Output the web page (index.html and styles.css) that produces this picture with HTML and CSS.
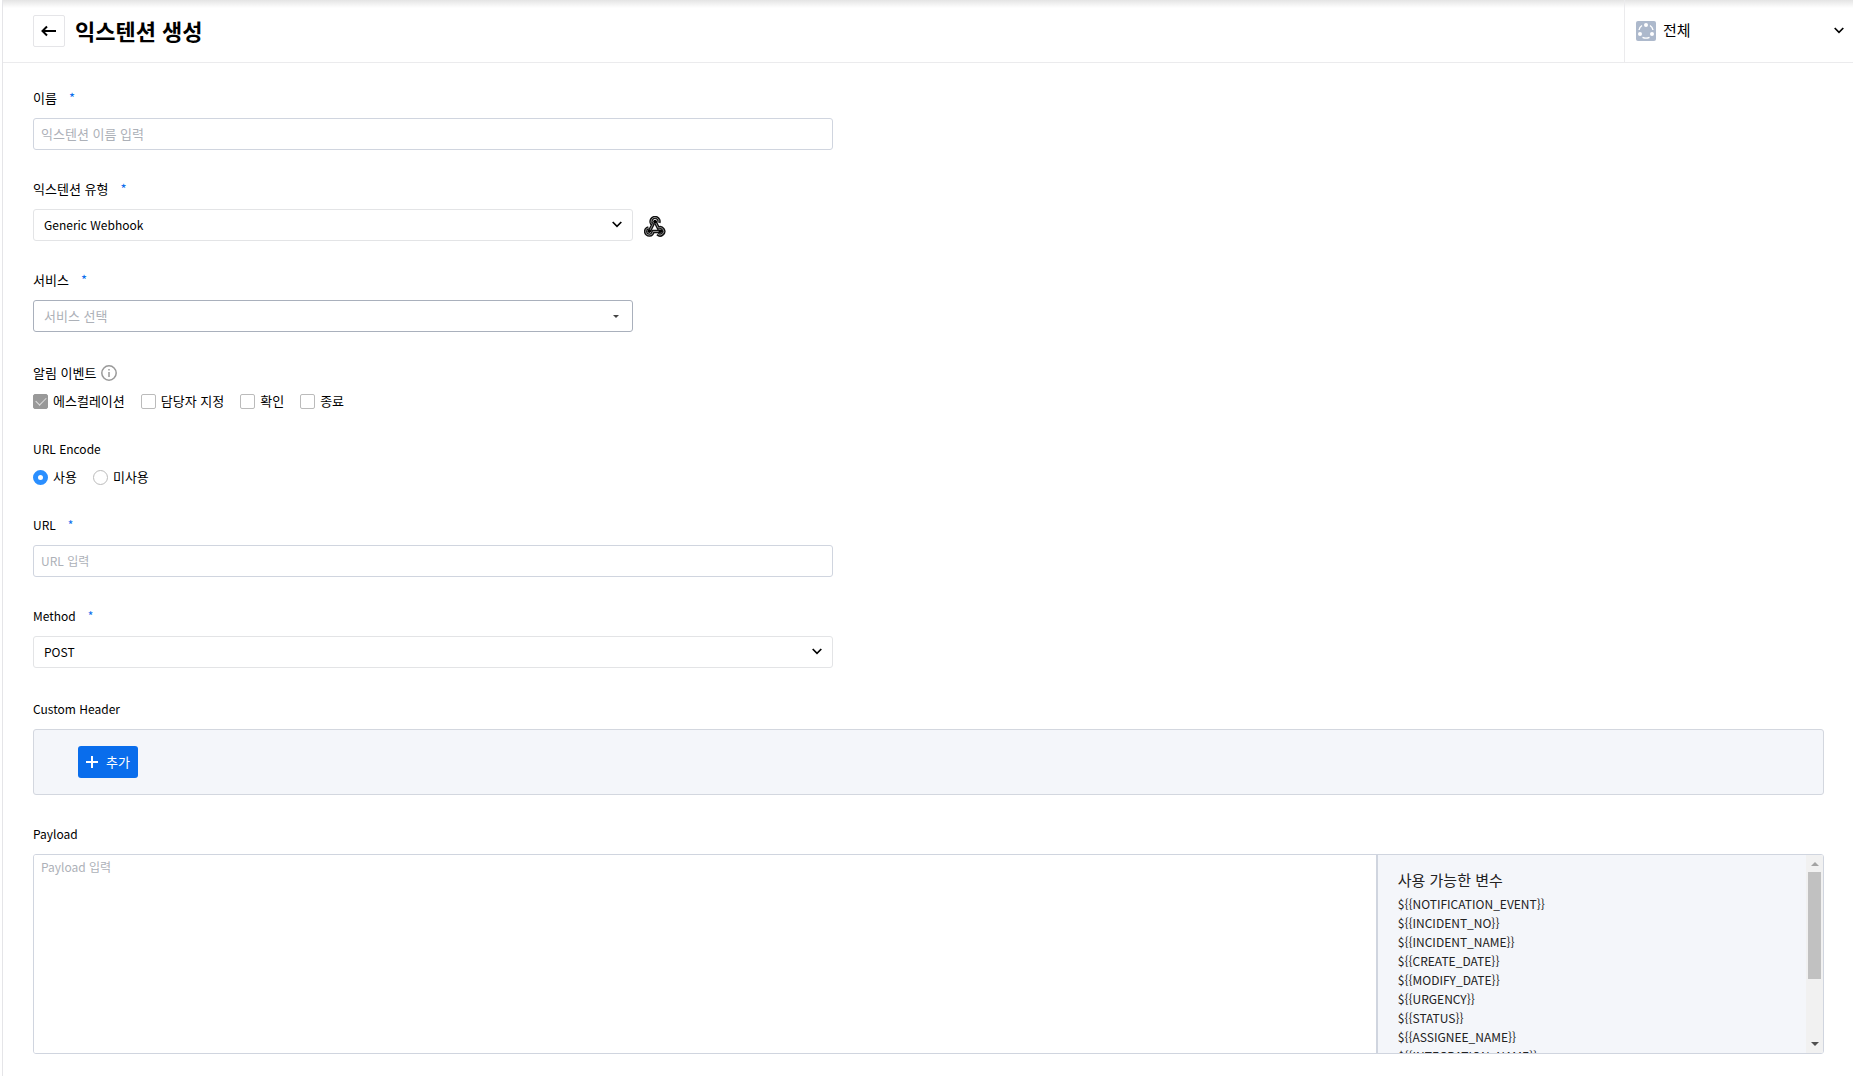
FILE: index.html
```
<!DOCTYPE html>
<html lang="ko">

<head>
	<meta charset="utf-8">
	<title>익스텐션 생성</title>
	<link rel="stylesheet" href="styles.css">
</head>

<body>
	<div class="page">
		<header class="header">
			<button type="button" class="back" aria-label="뒤로">
				<svg width="16" height="12" viewBox="0 0 16 12"><path d="M6 1.5L1.5 6L6 10.5M1.5 6H15" /></svg>
			</button>
			<h1>익스텐션 생성</h1>
			<div class="group">
				<svg class="group-icon" width="20" height="20" viewBox="0 0 20 20">
					<rect width="20" height="20" rx="2" fill="#adb9cc" />
					<g fill="#fff"><circle cx="10" cy="4" r="2" /><circle cx="4" cy="13" r="2" /><circle cx="16" cy="13" r="2" /></g>
					<path d="M6 4.500Q3.500 6 3 9M14 4.500Q16.500 6 17 9M6.500 16.300Q10 18 13.500 16.300" fill="none" stroke="#fff" stroke-width="1.400" />
				</svg>
				<select aria-label="그룹">
					<option>전체</option>
				</select>
				<svg class="chevron" width="10" height="7" viewBox="0 0 10 7"><path d="M.7 1L5 5.300L9.300 1" /></svg>
			</div>
		</header>

		<form class="form">
			<div class="field">
				<label for="name">이름<span class="required">*</span></label>
				<input type="text" id="name" placeholder="익스텐션 이름 입력" required>
			</div>

			<div class="field">
				<label for="type">익스텐션 유형<span class="required">*</span></label>
				<div class="row">
					<div class="select short">
						<select id="type" class="en">
							<option>Generic Webhook</option>
						</select>
						<svg class="chevron" width="10" height="7" viewBox="0 0 10 7"><path d="M.7 1L5 5.300L9.300 1" /></svg>
					</div>
					<svg class="webhook" width="22" height="22" viewBox="0 0 22 22">
						<g class="outer">
							<path d="M14.800 6.800A4 4 0 1 0 8.700 8.700L5.500 15" />
							<path d="M4.500 11.800A3.700 3.700 0 1 0 9 15.500H16" />
							<path d="M13.500 18A3.700 3.700 0 1 0 14.300 12L11 5.500" />
						</g>
						<g class="inner">
							<path d="M14.800 6.800A4 4 0 1 0 8.700 8.700L5.500 15" />
							<path d="M4.500 11.800A3.700 3.700 0 1 0 9 15.500H16" />
							<path d="M13.500 18A3.700 3.700 0 1 0 14.300 12L11 5.500" />
						</g>
						<circle cx="11" cy="5.500" r="1.800" />
						<circle cx="5.300" cy="15.300" r="1.800" />
						<circle cx="16.500" cy="15.300" r="1.800" />
					</svg>
				</div>
			</div>

			<div class="field wide">
				<label for="service">서비스<span class="required">*</span></label>
				<div class="select short service">
					<select id="service" required>
						<option value="">서비스 선택</option>
					</select>
					<svg class="caret" width="6" height="3" viewBox="0 0 6 3"><path d="M0 0H6L3 3Z" /></svg>
				</div>
			</div>

			<fieldset class="field choices">
				<legend>알림 이벤트<svg class="info" width="16" height="16" viewBox="0 0 16 16"><circle cx="8" cy="8" r="7.200" /><path d="M8 7V12M8 4V5.600" /></svg></legend>
				<div class="options">
					<label><input type="checkbox" checked disabled>에스컬레이션</label>
					<label><input type="checkbox">담당자 지정</label>
					<label><input type="checkbox">확인</label>
					<label><input type="checkbox">종료</label>
				</div>
			</fieldset>

			<fieldset class="field choices">
				<legend class="en">URL Encode</legend>
				<div class="options">
					<label><input type="radio" name="encode" checked>사용</label>
					<label><input type="radio" name="encode">미사용</label>
				</div>
			</fieldset>

			<div class="field">
				<label for="url" class="en">URL<span class="required">*</span></label>
				<input type="text" id="url" class="en" placeholder="URL 입력" required>
			</div>

			<div class="field wide">
				<label for="method" class="en">Method<span class="required">*</span></label>
				<div class="select">
					<select id="method" class="en">
						<option>POST</option>
					</select>
					<svg class="chevron" width="10" height="7" viewBox="0 0 10 7"><path d="M.7 1L5 5.300L9.300 1" /></svg>
				</div>
			</div>

			<div class="field">
				<div class="label en">Custom Header</div>
				<div class="panel">
					<button type="button" class="add">
						<svg width="12" height="12" viewBox="0 0 12 12"><path d="M6 0V12M0 6H12" /></svg>추가
					</button>
				</div>
			</div>

			<div class="field">
				<label for="payload" class="en">Payload</label>
				<div class="payload">
					<textarea id="payload" class="en" placeholder="Payload 입력"></textarea>
					<div class="side">
						<div class="variables">
							<h2>사용 가능한 변수</h2>
							<ul class="en">
								<li>${{NOTIFICATION_EVENT}}</li>
								<li>${{INCIDENT_NO}}</li>
								<li>${{INCIDENT_NAME}}</li>
								<li>${{CREATE_DATE}}</li>
								<li>${{MODIFY_DATE}}</li>
								<li>${{URGENCY}}</li>
								<li>${{STATUS}}</li>
								<li>${{ASSIGNEE_NAME}}</li>
								<li>${{INTEGRATION_NAME}}</li>
							</ul>
						</div>
						<div class="scrollbar">
							<svg width="8" height="4" viewBox="0 0 8 4"><path d="M0 4H8L4 0Z" fill="#a3a3a3" /></svg>
							<div class="track"><div class="thumb"></div></div>
							<svg width="8" height="4" viewBox="0 0 8 4"><path d="M0 0H8L4 4Z" fill="#505050" /></svg>
						</div>
					</div>
				</div>
			</div>
		</form>
	</div>
</body>

</html>
```
FILE: styles.css
```
* {
	box-sizing: border-box;
}

body {
	margin: 0;
	background: #fff;
	color: #000;
}

body,
input,
select,
textarea,
button {
	font-family: "Noto Sans CJK KR", sans-serif;
	font-size: 13px;
	line-height: 20px;
}

.en {
	font-size: 12px;
}

.page {
	min-height: 100vh;
	margin-left: 2px;
	border-left: 1px solid #e5e5e8;
}

.header {
	display: flex;
	align-items: center;
	height: 63px;
	padding-left: 30px;
	border-bottom: 1px solid #ebebed;
	background: linear-gradient(#e4e4e4, #fff 8px);
}

.back {
	display: flex;
	align-items: center;
	justify-content: center;
	width: 32px;
	height: 32px;
	padding: 0;
	border: 1px solid #e5e5e8;
	border-radius: 2px;
	background: #fff;
}

.back svg {
	fill: none;
	stroke: #000;
	stroke-width: 2;
}

.chevron {
	fill: none;
	stroke: #000;
	stroke-width: 1.7;
}

h1 {
	margin: 0 0 3px 10px;
	font-size: 22px;
	line-height: 32px;
	font-weight: 700;
}

.group {
	position: relative;
	display: flex;
	align-items: center;
	align-self: stretch;
	width: 229px;
	margin-left: auto;
	padding-left: 11px;
	border-left: 1px solid #ebebed;
}

.group select {
	flex: 1;
	height: 32px;
	padding: 0 28px 2px 7px;
	border: 0;
	font-size: 15px;
}

select {
	appearance: none;
	background: transparent;
	color: #000;
}

.chevron,
.caret {
	position: absolute;
	top: 50%;
	right: 11px;
	margin-top: -4px;
	pointer-events: none;
}

.group .chevron {
	right: 9px;
}

.form {
	padding: 25px 29px 22px 30px;
}

.field {
	margin: 0 0 29px;
	padding: 0;
	border: 0;
}

.field.wide {
	margin-bottom: 31px;
}

.field.choices {
	margin-bottom: 28px;
}

.field:last-child {
	margin-bottom: 0;
}

.field > label,
.label {
	display: block;
	margin-bottom: 10px;
}

.required {
	margin-left: 12px;
	color: #096dec;
}

input[type=text],
.select {
	display: block;
	width: 100%;
	max-width: 800px;
	height: 32px;
}

input[type=text] {
	padding: 0 7px 2px;
	border: 1px solid #d0d5df;
	border-radius: 3px;
}

::placeholder {
	color: #adb1b8;
}

.select {
	position: relative;
}

.select.short {
	max-width: 600px;
}

.select select {
	width: 100%;
	height: 32px;
	padding: 0 32px 0 10px;
	border: 1px solid #e3e4e6;
	border-radius: 3px;
}

.service select {
	border-color: #a9b0bc;
	color: #adb1b8;
}

.caret {
	right: 14px;
	margin-top: -1px;
	fill: #444;
}

.row {
	display: flex;
	align-items: center;
	gap: 11px;
}

.webhook {
	margin-top: 4px;
}

.outer {
	fill: none;
	stroke: #111;
	stroke-width: 3.4;
}

.inner {
	fill: none;
	stroke: #999;
	stroke-width: .9;
}

.choices legend {
	display: flex;
	align-items: center;
	gap: 5px;
	height: 20px;
	margin-bottom: 8px;
	padding: 0;
}

.info {
	fill: none;
	stroke: #999;
	stroke-width: 1.5;
}

.options {
	display: flex;
	gap: 16px;
}

.options label {
	display: flex;
	align-items: center;
	gap: 5px;
}

.options input {
	display: grid;
	place-items: center;
	appearance: none;
	width: 15px;
	height: 15px;
	margin: 0;
	border: 1px solid #bbb;
	border-radius: 2px;
	background: #fff;
}

.options input[type=radio] {
	border-radius: 50%;
}

.options input[type=checkbox]:checked {
	border-color: #999;
	background: #999;
}

.options input[type=checkbox]:checked::before {
	content: "";
	width: 9px;
	height: 5px;
	margin-bottom: 3px;
	border: solid #ddd;
	border-width: 0 0 1px 1px;
	transform: rotate(-45deg);
}

.options input[type=radio]:checked {
	border: 5px solid #2a8fff;
}

.panel {
	padding: 16px 44px;
	border: 1px solid #d3d7df;
	border-radius: 3px;
	background: #f4f6fa;
}

.add {
	display: flex;
	align-items: center;
	gap: 8px;
	height: 32px;
	padding: 0 8px;
	border: 0;
	border-radius: 3px;
	background: #096dec;
	color: #fff;
}

.add svg {
	stroke: #fff;
	stroke-width: 2;
}

.payload {
	display: flex;
	height: 200px;
	border: 1px solid #d0d5df;
	border-radius: 3px;
	overflow: hidden;
}

textarea {
	flex: 1;
	padding: 2px 7px;
	border: 0;
	resize: none;
}

.side {
	display: flex;
	width: 25%;
	border-left: 2px solid #d0d5df;
	background: #f4f6fa;
}

.variables {
	flex: 1;
	padding: 14px 20px 0;
	overflow: hidden;
	color: #222;
}

h2 {
	margin: 0 0 3px;
	font-size: 15px;
	line-height: 22px;
	font-weight: 400;
}

ul {
	margin: 0;
	padding: 0;
	list-style: none;
}

li {
	line-height: 19px;
}

.scrollbar {
	display: flex;
	flex-direction: column;
	align-items: center;
	width: 17px;
	padding: 7px 0;
	background: #f1f1f1;
}

.track {
	flex: 1;
	width: 13px;
	margin: 6px 0;
}

.thumb {
	height: 107px;
	background: #c1c1c1;
}
```
